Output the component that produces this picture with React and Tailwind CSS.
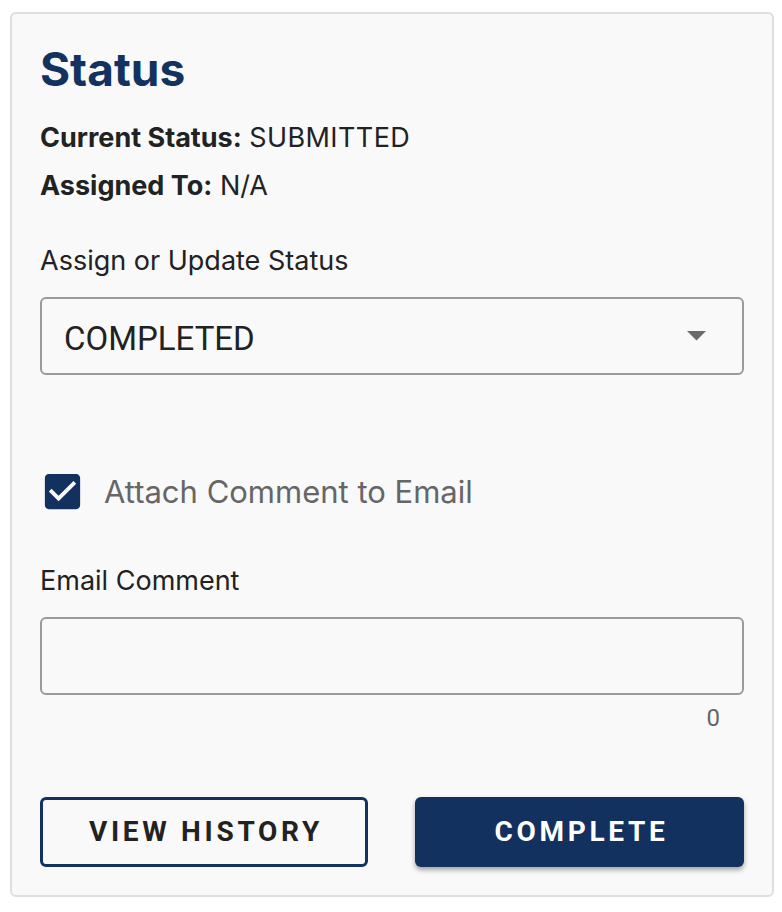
import React from 'react';

function App() {
  return (
    <div className="min-h-[912px] bg-white pt-[12px] pr-[8px] pb-[10px] pl-[10px]" style={{ fontFamily: 'Inter, "Liberation Sans", sans-serif' }}>
      <div className="rounded-md border-2 border-[#dedede] bg-[#f9f9f9] px-[28px] pt-[27px] pb-[28px]">
        <h2 className="text-[46px] font-bold leading-[56px] text-[#12325f]">Status</h2>

        <div className="mt-[24px] text-[27px] leading-[34px] text-[#222]">
          <p><span className="font-bold">Current Status:</span> <span className="tracking-[0.4px]">SUBMITTED</span></p>
          <p className="mt-[14px]"><span className="font-bold">Assigned To:</span> N/A</p>
        </div>

        <label className="mt-[41px] block text-[27px] leading-[34px] text-[#222]">Assign or Update Status</label>
        <div className="mt-[19px] flex h-[78px] items-center justify-between rounded-md border-2 border-[#9a9a9a] pl-[22px] pr-[36px]">
          <span className="pt-[5px] text-[33px] leading-[40px] text-[#222]" style={{ fontFamily: 'Roboto, sans-serif' }}>COMPLETED</span>
          <svg width="19" height="10" viewBox="0 0 19 10">
            <path d="M0 0 L19 0 L9.5 9.5 Z" fill="#6b6b6b" />
          </svg>
        </div>

        <div className="mt-[93px] flex items-center">
          <svg className="-ml-px" width="47" height="47" viewBox="0 0 24 24">
            <path
              d="M19 3H5c-1.11 0-2 .9-2 2v14c0 1.1.89 2 2 2h14c1.11 0 2-.9 2-2V5c0-1.1-.89-2-2-2zm-9 14l-5-5 1.41-1.41L10 14.17l7.59-7.59L19 8l-9 9z"
              fill="#12315f"
            />
          </svg>
          <span className="ml-[18px] text-[31px] leading-[38px] text-[#666]">Attach Comment to Email</span>
        </div>

        <label className="mt-[49px] block text-[27px] leading-[34px] text-[#222]">Email Comment</label>
        <div className="mt-[19px] h-[78px] rounded-md border-2 border-[#9a9a9a]"></div>
        <div className="mt-[10px] pr-[24px] text-right text-[24px] leading-[26px] text-[#666]" style={{ fontFamily: 'Roboto, sans-serif' }}>0</div>

        <div className="mt-[66px] flex justify-between">
          <button className="h-[70px] w-[328px] rounded-md border-[3px] border-[#12325f] bg-[#f9f9f9] pl-[4px] text-[28px] font-bold tracking-[3.7px] text-[#222]" style={{ fontFamily: 'Roboto, sans-serif' }}>
            VIEW HISTORY
          </button>
          <button className="h-[70px] w-[329px] rounded-md bg-[#12315f] pl-[4px] text-[28px] font-bold tracking-[3.7px] text-white shadow-[0_3px_5px_rgba(0,0,0,0.35)]" style={{ fontFamily: 'Roboto, sans-serif' }}>
            COMPLETE
          </button>
        </div>
      </div>
    </div>
  );
}

export default App;
